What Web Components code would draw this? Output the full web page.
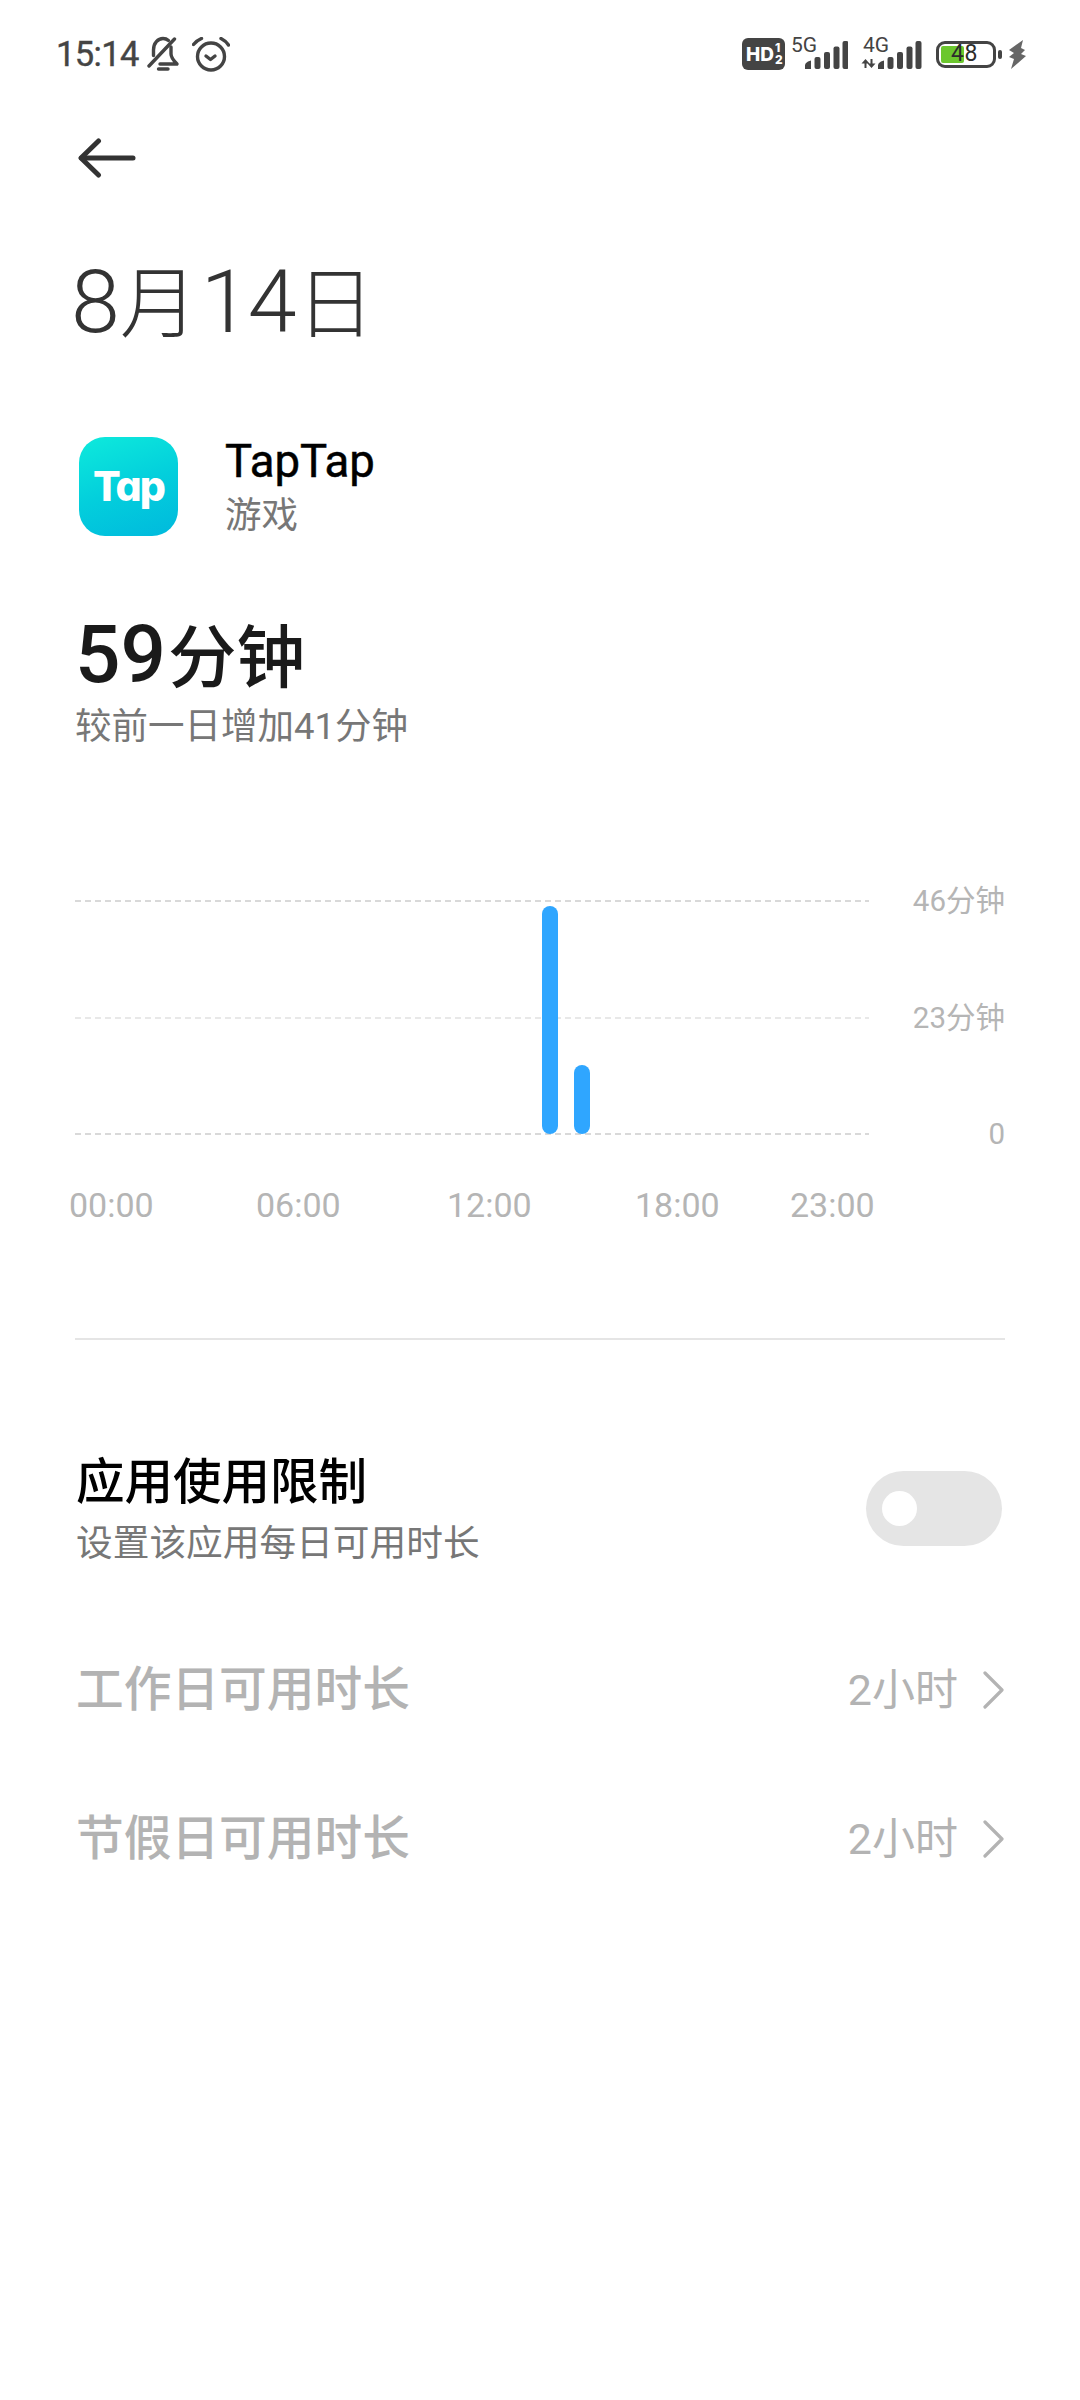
<!DOCTYPE html>
<html lang="zh-CN">
<head>
<meta charset="utf-8">
<title>TapTap</title>
<style>
  html, body { margin: 0; background: #fff; }
  body { width: 1080px; height: 2400px; overflow: hidden; font-family: Roboto, "Noto Sans CJK SC", sans-serif; }
</style>
</head>
<body>
<usage-page>
  <status-bar></status-bar>
  <back-nav></back-nav>
  <date-title></date-title>
  <app-header name="TapTap" category="游戏"></app-header>
  <usage-summary delta="较前一日增加41分钟"></usage-summary>
  <usage-chart></usage-chart>
  <limit-toggle title="应用使用限制" desc="设置该应用每日可用时长"></limit-toggle>
  <limit-row label="工作日可用时长" value="2小时"></limit-row>
  <limit-row label="节假日可用时长" value="2小时"></limit-row>
</usage-page>

<script>
const FONT = `Roboto, "Noto Sans CJK SC", sans-serif`;

class ShadowElement extends HTMLElement {
  constructor() {
    super();
    this.attachShadow({ mode: 'open' });
  }
  connectedCallback() {
    this.shadowRoot.innerHTML = this.render();
  }
  attr(name) {
    return this.getAttribute(name) || '';
  }
}

class UsagePage extends ShadowElement {
  render() {
    return `<style>:host { display: flex; flex-direction: column; width: 1080px; }</style><slot></slot>`;
  }
}

class SignalMeter extends ShadowElement {
  render() {
    const arrows = this.hasAttribute('arrows');
    return `
      <style>
        :host { display: grid; width: ${arrows ? 61 : 57}px; height: 32px; }
        span, svg { grid-area: 1 / 1; }
        span {
          font: 400 21px/14px ${FONT};
          color: #444;
          margin-left: ${arrows ? 2 : 0}px;
        }
        svg { display: block; }
      </style>
      <span>${this.attr('label')}</span>
      <svg width="${arrows ? 61 : 57}" height="32" viewBox="0 0 ${arrows ? 61 : 57} 32" fill="#444">
        ${arrows ? `<path d="M4 21 0 25.500h3V30h2V25.500H8zM10 30l4-4.500h-3V21H9v4.500H6z" transform="translate(0.500 0)"/>` : ''}
        <g transform="translate(${arrows ? 17 : 14} 0)">
          <path d="M0 31v-4q0-2 3-3.500l3-1V31z"/>
          <rect x="9.500" y="19" width="6" height="12" rx="2"/>
          <rect x="19" y="14" width="6" height="17" rx="2"/>
          <rect x="28.500" y="8.500" width="6" height="22.500" rx="2"/>
          <rect x="37.500" y="3" width="6" height="28" rx="2"/>
        </g>
      </svg>`;
  }
}

class BatteryMeter extends ShadowElement {
  render() {
    return `
      <style>
        :host { display: flex; align-items: center; }
        .shell {
          box-sizing: border-box;
          width: 60px;
          height: 27px;
          border: 3.500px solid #444;
          border-radius: 9px;
          padding: 2px;
          display: grid;
        }
        .fill { grid-area: 1 / 1; width: 23px; background: #6cc72e; border-radius: 2px; }
        .num {
          grid-area: 1 / 1;
          font: 400 23px/16px ${FONT};
          color: #2c2c2c;
          padding-left: 10px;
          letter-spacing: 0.500px;
        }
        .nub { width: 4px; height: 9px; background: #444; border-radius: 2px; margin-left: 2px; }
      </style>
      <div class="shell"><div class="fill"></div><div class="num">${this.attr('level')}</div></div>
      <div class="nub"></div>`;
  }
}

class StatusBar extends ShadowElement {
  render() {
    return `
      <style>
        :host {
          display: flex;
          align-items: center;
          height: 108px;
          padding: 0 54px 0 56px;
          box-sizing: border-box;
          color: #444;
        }
        .time { font: 400 34.500px/40px ${FONT}; letter-spacing: -0.600px; -webkit-text-stroke: 0.400px #444; }
        .left { display: flex; align-items: center; }
        .right { display: flex; align-items: center; margin-left: auto; }
        svg { display: block; }
        .bell { margin-left: 8px; }
        .alarm { margin-left: 12px; }
        .hd {
          box-sizing: border-box;
          width: 43px;
          height: 32px;
          background: #444;
          border-radius: 6px;
          color: #fff;
          display: flex;
          align-items: center;
          padding-left: 4px;
          font: 800 19px/1 Inter, ${FONT};
        }
        .frac { display: flex; flex-direction: column; font-size: 12px; line-height: 12px; margin-left: 1px; font-weight: 800; }
        signal-meter:first-of-type { margin-left: 6px; }
        .second { margin-left: 13px; }
        battery-meter { margin-left: 14px; }
        .bolt { margin-left: 7px; }
      </style>
      <div class="left">
        <span class="time">15:14</span>
        <svg class="bell" width="33" height="36" viewBox="0 0 33 36" fill="none" stroke="#444" stroke-width="3.400" stroke-linecap="round" stroke-linejoin="round">
          <path d="M6.500 19.500V14C6.500 7 11 2.500 16 2.500c2 0 4 .7 5.500 2"/>
          <path d="M24 11v7c0 3.500 2.500 6.500 6 10H13"/>
          <path d="M2 30 27.500 3"/>
          <path d="M11.500 33h9.500"/>
        </svg>
        <svg class="alarm" width="38" height="35" viewBox="0 0 38 35" fill="none" stroke="#444" stroke-width="3.400" stroke-linecap="round" stroke-linejoin="round">
          <circle cx="19" cy="19.500" r="13.500"/>
          <path d="M1.500 7.500C3.500 5 6 3 9.500 1.500"/>
          <path d="M29 1.500C32 3 34.500 5 36.500 8"/>
          <path d="M14 19l4.500 3.500L23 19"/>
        </svg>
      </div>
      <div class="right">
        <div class="hd">HD<span class="frac"><span>1</span><span>2</span></span></div>
        <signal-meter label="5G"></signal-meter>
        <signal-meter class="second" label="4G" arrows></signal-meter>
        <battery-meter level="48"></battery-meter>
        <svg class="bolt" width="17" height="29" viewBox="0 0 17 29" fill="#666">
          <path d="M14 0 0 10l5 3-5 4 5 2-3 10 15-13-5-2 4-4-4-2z"/>
        </svg>
      </div>`;
  }
}

class BackNav extends ShadowElement {
  render() {
    return `
      <style>
        :host { display: flex; align-items: center; height: 100px; padding-left: 78px; }
        svg { display: block; }
      </style>
      <svg width="58" height="40" viewBox="0 0 58 40" fill="none" stroke="#333" stroke-width="5" stroke-linecap="round" stroke-linejoin="round">
        <path d="M55 20H3.500"/>
        <path d="M20.500 3 3 20l17.500 17"/>
      </svg>`;
  }
}

class DateTitle extends ShadowElement {
  render() {
    return `
      <style>
        :host {
          display: block;
          height: 100px;
          margin-top: 44px;
          padding-left: 71px;
          font: 300 88px/100px ${FONT};
          color: #333;
        }
        .c { font-size: 78px; margin: 0 3px 0 2px; }
        .n { letter-spacing: -2px; }
      </style>
      <span class="n">8</span><span class="c">月</span><span class="n">14</span><span class="c">日</span>`;
  }
}

class AppHeader extends ShadowElement {
  render() {
    return `
      <style>
        :host { display: flex; margin-top: 85px; padding-left: 79px; gap: 47px; }
        .icon {
          width: 99px;
          height: 99px;
          border-radius: 26px;
          background: linear-gradient(160deg, #0eeadc 0%, #03cfdc 50%, #00b9dd 100%);
          display: flex;
          align-items: center;
          justify-content: center;
          color: #fff;
          font: 800 41px/1 Inter, ${FONT};
          font-feature-settings: "cv11";
          letter-spacing: -2px;
        }
        .name { font: 400 45.500px/50px ${FONT}; color: #000; -webkit-text-stroke: 0.500px #000; }
        .cat { font: 400 36.500px/52px ${FONT}; color: #777; margin-top: 3px; }
      </style>
      <div class="icon">Tap</div>
      <div>
        <div class="name">${this.attr('name')}</div>
        <div class="cat">${this.attr('category')}</div>
      </div>`;
  }
}

class UsageSummary extends ShadowElement {
  render() {
    return `
      <style>
        :host { display: block; margin-top: 73px; padding-left: 75px; }
        .total { font: 500 80px/80px ${FONT}; color: #1a1a1a; height: 80px; }
        .total span { font-size: 68.500px; margin-left: 2px; }
        .delta { font: 400 36.500px/50px ${FONT}; color: #777; margin-top: 7px; }
      </style>
      <div class="total">59<span>分钟</span></div>
      <div class="delta">${this.attr('delta')}</div>`;
  }
}

class UsageChart extends ShadowElement {
  render() {
    const hours = Array.from({ length: 24 }, (_, h) => {
      if (h === 14) return '<i style="height:228px"></i>';
      if (h === 15) return '<i style="height:69px"></i>';
      return '<b></b>';
    }).join('');
    return `
      <style>
        :host { display: block; margin-top: 129px; padding-left: 75px; padding-right: 75px; }
        .plot { position: relative; display: flex; flex-direction: column; gap: 76.500px; }
        .row { display: flex; align-items: center; height: 40px; }
        .line {
          width: 794px;
          height: 1.500px;
          background: repeating-linear-gradient(90deg, #d9d9d9 0 6px, transparent 6px 10px);
        }
        .mid { height: 2px; background: repeating-linear-gradient(90deg, #e8e8e8 0 6px, transparent 6px 10px); }
        .val {
          flex: 1;
          text-align: right;
          font: 400 29.500px/40px ${FONT};
          color: #b5b5b5;
        }
        .bars {
          position: absolute;
          left: 11px;
          bottom: 20px;
          display: grid;
          grid-template-columns: repeat(24, 32px);
          align-items: end;
        }
        .bars i { display: block; width: 16px; margin: 0 auto; background: #2fa6ff; border-radius: 8px; }
        .ticks {
          display: grid;
          grid-template-columns: 187px 191px 188px 155px auto;
          margin: 31px 0 0 -6px;
          font: 400 34px/40px ${FONT};
          color: #b5b5b5;
        }
        .divider { height: 2px; background: #e5e5e5; margin-top: 113px; }
      </style>
      <div class="plot">
        <div class="row"><div class="line"></div><div class="val">46分钟</div></div>
        <div class="row"><div class="line mid"></div><div class="val">23分钟</div></div>
        <div class="row"><div class="line"></div><div class="val">0</div></div>
        <div class="bars">${hours}</div>
      </div>
      <div class="ticks"><span>00:00</span><span>06:00</span><span>12:00</span><span>18:00</span><span>23:00</span></div>
      <div class="divider"></div>`;
  }
}

class LimitToggle extends ShadowElement {
  render() {
    return `
      <style>
        :host {
          display: flex;
          align-items: center;
          justify-content: space-between;
          margin-top: 115px;
          padding: 0 78px 0 76px;
        }
        .title { font: 500 48.500px/56px ${FONT}; color: #000; }
        .desc { font: 400 36.700px/44px ${FONT}; color: #777; margin-top: 11px; }
        .switch {
          box-sizing: border-box;
          width: 136px;
          height: 75px;
          margin-top: -4px;
          border-radius: 38px;
          background: #e5e5e5;
          display: flex;
          align-items: center;
          padding-left: 16px;
        }
        .knob { width: 35px; height: 35px; border-radius: 50%; background: #fff; }
      </style>
      <div>
        <div class="title">${this.attr('title')}</div>
        <div class="desc">${this.attr('desc')}</div>
      </div>
      <div class="switch"><div class="knob"></div></div>`;
  }
}

class LimitRow extends ShadowElement {
  render() {
    return `
      <style>
        :host {
          display: flex;
          align-items: center;
          height: 148.500px;
          padding: 0 76px 0 76px;
          color: #b3b3b3;
        }
        :host(:first-of-type) { margin-top: 50px; }
        .label { font: 500 47.700px/56px ${FONT}; }
        .value { margin-left: auto; font: 400 43px/56px ${FONT}; }
        svg { display: block; margin-left: 24px; }
      </style>
      <div class="label">${this.attr('label')}</div>
      <div class="value">${this.attr('value')}</div>
      <svg width="22" height="38" viewBox="0 0 22 38" fill="none" stroke="#b3b3b3" stroke-width="3.200" stroke-linecap="round" stroke-linejoin="round">
        <path d="M3 2 20 19 3 36"/>
      </svg>`;
  }
}

customElements.define('usage-page', UsagePage);
customElements.define('signal-meter', SignalMeter);
customElements.define('battery-meter', BatteryMeter);
customElements.define('status-bar', StatusBar);
customElements.define('back-nav', BackNav);
customElements.define('date-title', DateTitle);
customElements.define('app-header', AppHeader);
customElements.define('usage-summary', UsageSummary);
customElements.define('usage-chart', UsageChart);
customElements.define('limit-toggle', LimitToggle);
customElements.define('limit-row', LimitRow);
</script>
</body>
</html>
